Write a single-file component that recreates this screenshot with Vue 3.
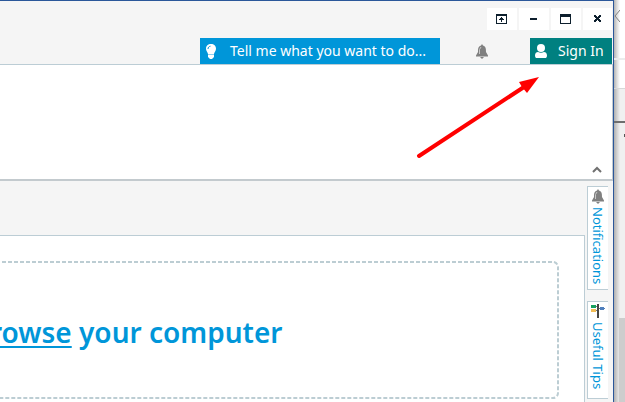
<script setup>
const sideTabs = [
  { id: 'notifications', label: 'Notifications' },
  { id: 'tips', label: 'Useful Tips' },
]
</script>

<template>
  <div class="desktop">
    <main class="window">
      <header class="titlebar">
        <div class="window-controls">
          <button type="button" aria-label="Ribbon display options">
            <svg width="12" height="10" viewBox="0 0 12 10" shape-rendering="crispEdges">
              <path d="M0 0h11v10H0zM1 2v7h9V2z" fill="#0d1f2d" fill-rule="evenodd" />
              <path d="M5 3h1v1h1v1h1v1H6v2H5V6H3V5h1V4h1z" fill="#0d1f2d" />
            </svg>
          </button>
          <button type="button" aria-label="Minimize">
            <svg width="8" height="10" viewBox="0 0 8 10"><path d="M0 4h7v2H0z" fill="#0d1f2d" /></svg>
          </button>
          <button type="button" aria-label="Maximize">
            <svg width="12" height="10" viewBox="0 0 12 10" shape-rendering="crispEdges">
              <path d="M0 0h11v10H0zM1 3v6h9V3z" fill="#0d1f2d" fill-rule="evenodd" />
            </svg>
          </button>
          <button type="button" class="close" aria-label="Close">
            <svg width="7" height="8" viewBox="0 0 7 8" shape-rendering="crispEdges">
              <path d="M0 0h2v1h1v1h1V1h1V0h2v2H6v1H5v1h1v1h1v2H5V6H4V5H3v1H2v1H0V5h1V4h1V3H1V2H0z" fill="#0d1f2d" />
            </svg>
          </button>
        </div>
        <div class="actions">
          <button type="button" class="action tell-me">
            <svg width="10" height="15" viewBox="0 0 10 15">
              <path d="M5 0C2 0 0 2 0 4.700 0 7 1.700 8 2 10h6c.3-2 2-3 2-5.300C10 2 8 0 5 0z" fill="#fff" />
              <path d="M2 11h6v2L6 15H4l-2-2z" fill="#fff" />
              <path d="M2 5c0-1.600 1-2.600 2.500-2.800" fill="none" stroke="#0096d9" />
              <path d="M2 10.500h6" stroke="#8fd0f0" />
            </svg>
            <span>Tell me what you want to do...</span>
          </button>
          <button type="button" class="bell" aria-label="Notifications">
            <svg width="12" height="15" viewBox="0 0 12 15">
              <path d="M6 0l1 1.500C10 2.500 10 5 10 8l2 3.500v1H0v-1L2 8c0-3 0-5.500 3-6.500z" fill="#808080" />
              <path d="M4 13h4l-2 2z" fill="#808080" />
              <path d="M3.500 10V5.500L5 3" fill="none" stroke="#c8c8c8" />
            </svg>
          </button>
          <button type="button" class="action sign-in">
            <svg width="12" height="14" viewBox="0 0 12 14">
              <circle cx="6" cy="4" r="4" fill="#fff" />
              <path d="M1 14q-1-1-1-2.500C0 9 1.500 8 3 8q3 1.500 6 0c1.500 0 3 1 3 3.500q0 1.500-1 2.500z" fill="#fff" />
            </svg>
            <span>Sign In</span>
          </button>
        </div>
      </header>

      <section class="ribbon">
        <button type="button" class="collapse" aria-label="Collapse ribbon">
          <svg width="10" height="7" viewBox="0 0 10 7"><path d="M1 6l4-4 4 4" fill="none" stroke="#707070" stroke-width="2" /></svg>
        </button>
      </section>

      <div class="workspace">
        <section class="page">
          <div class="drop-zone">
            <svg class="outline"><rect x="-9" y="1" rx="5" /></svg>
            <p><a href="#browse">rowse</a> your computer</p>
          </div>
        </section>
        <nav class="side-tabs">
          <button v-for="tab in sideTabs" :key="tab.id" type="button" :class="tab.id">
            <svg v-if="tab.id === 'notifications'" width="12" height="15" viewBox="0 0 12 15">
              <path d="M6 0l1 1.500C10 2.500 10 5 10 8l2 3.500v1H0v-1L2 8c0-3 0-5.500 3-6.500z" fill="#808080" />
              <path d="M4 13h4l-2 2z" fill="#808080" />
              <path d="M3.500 10V5.500L5 3" fill="none" stroke="#c8c8c8" />
            </svg>
            <svg v-else width="14" height="15" viewBox="0 0 14 15">
              <path d="M6 0h2v14H6z" fill="#454545" />
              <path d="M0 1h5v3H0z" fill="#16a05d" />
              <path d="M9 3h4v1h1v1h-1v1H9z" fill="#4f7fbd" />
              <path d="M0 5h5v3H0z" fill="#f2bd55" />
              <path d="M5 2h1v1H5zM8 4h1v1H8zM5 6h1v1H5z" fill="#777" />
            </svg>
            <span>{{ tab.label }}</span>
          </button>
        </nav>
      </div>
    </main>

    <aside class="behind">
      <div class="behind-top">
        <svg width="6" height="13" viewBox="0 0 6 13"><path d="M6 0L1 6l5 6" fill="none" stroke="#808080" /></svg>
      </div>
      <div class="behind-row"></div>
      <div class="behind-bar"></div>
      <div class="behind-body"><i></i></div>
      <div class="behind-scroll"></div>
    </aside>

    <svg class="pointer" width="124" height="86" viewBox="0 0 124 86">
      <path d="M4 82L109 13" stroke="#f00" stroke-width="4" stroke-linecap="round" />
      <path d="M124 3L104 8l3 5 5 6z" fill="#f00" />
    </svg>
  </div>
</template>

<style>
body {
  margin: 0;
}
</style>

<style scoped>
.desktop {
  position: relative;
  display: grid;
  grid-template-columns: minmax(0, 1fr) 11px;
  min-height: 100vh;
  overflow: hidden;
  font-family: "Noto Sans", "Open Sans", sans-serif;
  background: #f5f5f5;
}
button {
  margin: 0;
  padding: 0;
  border: 0;
  font: inherit;
  background: none;
}
svg {
  display: block;
  flex: none;
}
.window {
  display: flex;
  flex-direction: column;
  border-top: 1px solid #2b579a;
  border-right: 1px solid #2b579a;
  background: #f5f5f5;
}
.titlebar {
  padding-top: 7px;
  padding-right: 1px;
  border-bottom: 1px solid #bccdd5;
}
.window-controls {
  display: flex;
  justify-content: flex-end;
  gap: 2px;
}
.window-controls button {
  display: grid;
  place-items: center;
  width: 30px;
  height: 22px;
  background: #fff;
}
.window-controls .close {
  width: 29px;
}
.actions {
  display: flex;
  justify-content: flex-end;
  margin-top: 8px;
}
.action {
  display: flex;
  align-items: center;
  height: 26px;
  box-sizing: border-box;
  color: #fff;
  font-size: 14px;
  line-height: 20px;
  white-space: nowrap;
}
.tell-me {
  width: 240px;
  gap: 14px;
  padding-left: 6px;
  background: #0096d9;
}
.bell {
  display: grid;
  place-items: center;
  width: 84px;
  margin-right: 6px;
}
.sign-in {
  width: 82px;
  gap: 11px;
  padding-left: 5px;
  background: #008080;
}
.ribbon {
  display: flex;
  justify-content: flex-end;
  align-items: flex-end;
  height: 114px;
  padding: 0 10px 0 0;
  border-right: 1px solid #c3cace;
  border-bottom: 2px solid #c3cace;
  background: #fff;
}
.collapse {
  padding-bottom: 6px;
}
.workspace {
  display: flex;
  flex: 1;
}
.page {
  flex: 1;
  min-width: 0;
  margin-top: 54px;
  padding: 25px 25px 0 0;
  border-top: 1px solid #bccdd5;
  border-right: 1px solid #bccdd5;
  background: #fff;
}
.drop-zone {
  position: relative;
  display: flex;
  align-items: center;
  height: 138px;
}
.outline {
  position: absolute;
  inset: 0;
  width: 100%;
  height: 100%;
}
.outline rect {
  width: calc(100% + 8px);
  height: calc(100% - 2px);
  fill: none;
  stroke: #bccdd3;
  stroke-width: 2px;
  stroke-dasharray: 4 2;
}
.drop-zone p {
  position: relative;
  margin: 3px 0 0 -10px;
  color: #0096d9;
  font-size: 28px;
  font-weight: 600;
  line-height: 36px;
  white-space: nowrap;
}
.drop-zone a {
  color: inherit;
  text-decoration-thickness: 2px;
  text-underline-offset: 3px;
}
.side-tabs {
  display: flex;
  flex-direction: column;
  gap: 11px;
  padding: 5px 5px 0 2px;
}
.side-tabs button {
  display: flex;
  flex-direction: column;
  align-items: center;
  gap: 3px;
  width: 21px;
  height: 104px;
  padding-top: 2px;
  border: 1px solid #bccdd5;
  border-right: 0;
  box-sizing: border-box;
  color: #0096d9;
  font-size: 13px;
  line-height: 18px;
  background: #fff;
}
.side-tabs .tips {
  height: 98px;
}
.side-tabs span {
  writing-mode: vertical-rl;
  white-space: nowrap;
}
.behind {
  display: flex;
  flex-direction: column;
  background: linear-gradient(90deg, #b0b0b0, #d2d2d2 3px, #f0f0f0 6px);
}
.behind-top,
.behind-row {
  box-sizing: border-box;
  background: linear-gradient(90deg, #b4b4b4, #dedede 3px, #fff 6px);
}
.behind-top {
  height: 60px;
  padding-top: 10px;
  border-bottom: 2px solid #ececec;
}
.behind-row {
  height: 29px;
  border-bottom: 1px solid #d8d8d8;
}
.behind-bar {
  height: 32px;
  border-bottom: 2px solid #6e6e6e;
}
.behind-body {
  display: flex;
  justify-content: flex-end;
  height: 195px;
  padding-top: 11px;
  box-sizing: border-box;
}
.behind-body i {
  width: 1px;
  height: 3px;
  background: #555;
}
.behind-scroll {
  flex: 1;
  margin-left: 5px;
  background: #cdcdcd;
}
.pointer {
  position: absolute;
  top: 74px;
  right: 86px;
}
</style>
